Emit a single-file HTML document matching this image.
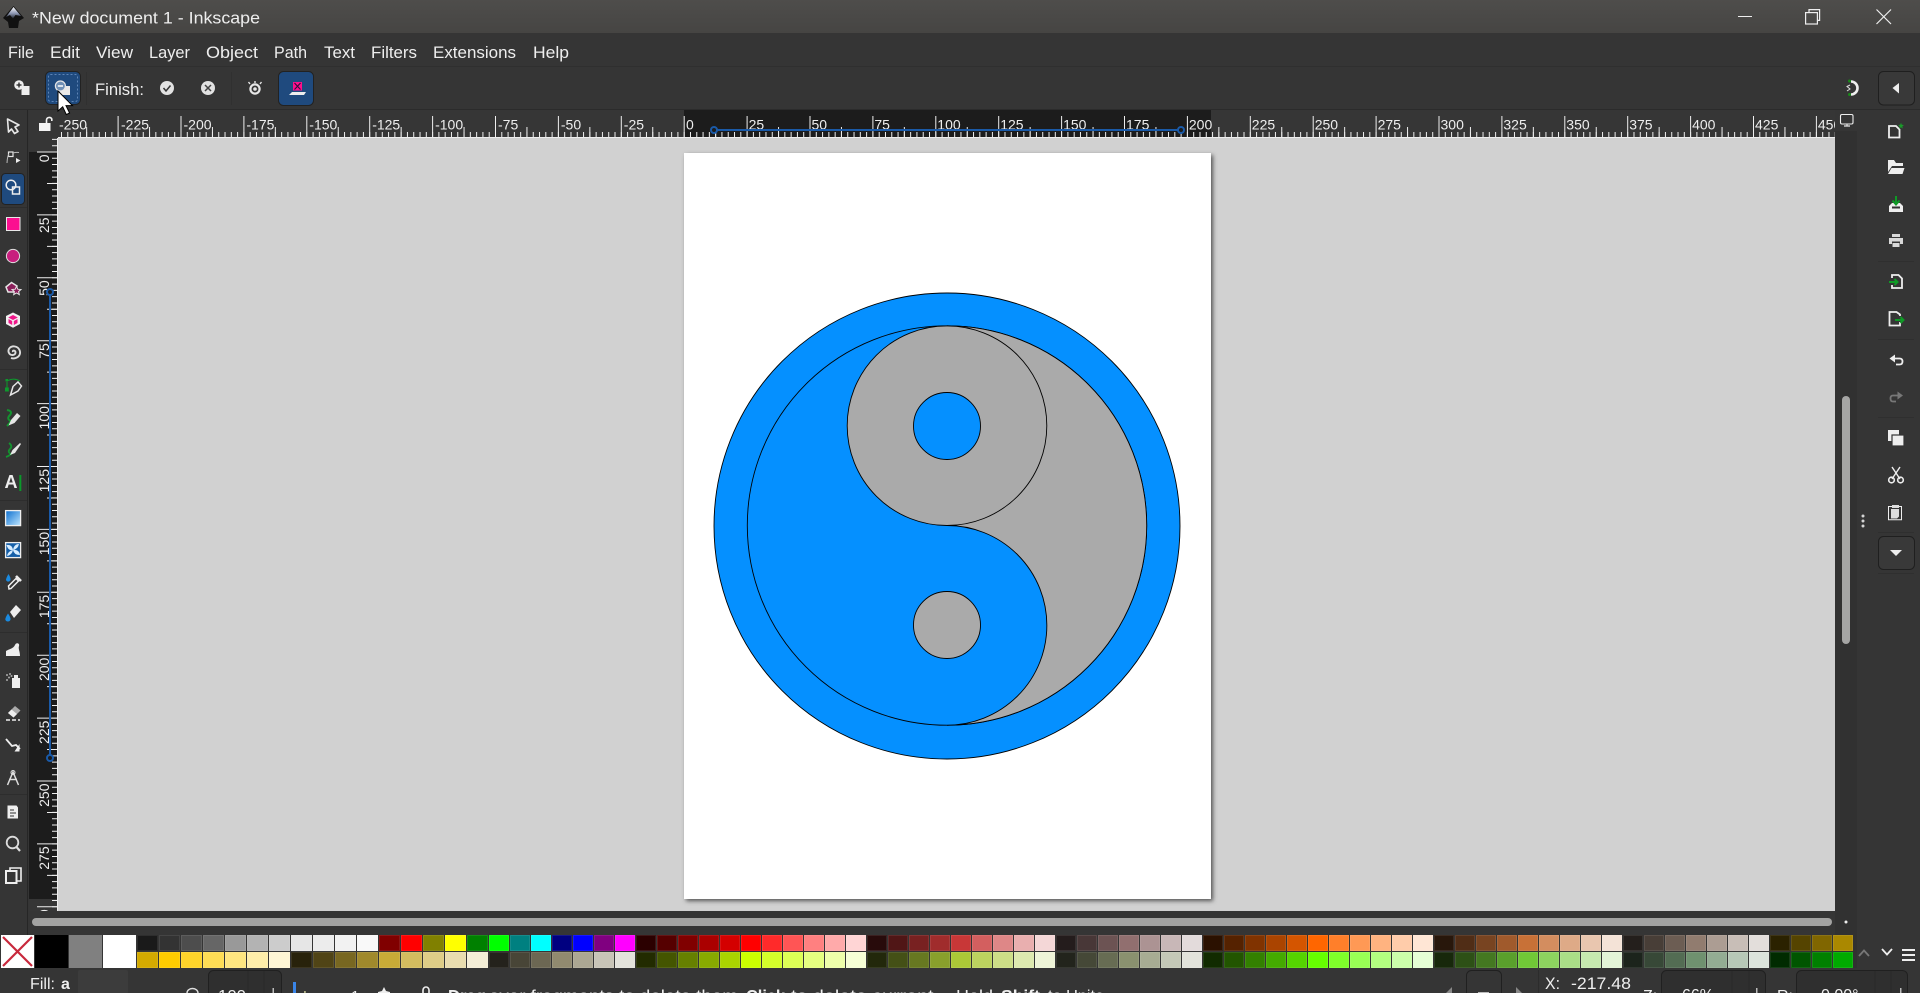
<!DOCTYPE html>
<html lang="en">
<head>
<meta charset="utf-8">
<title>New document 1 - Inkscape</title>
<style>
html,body{margin:0;padding:0;width:1920px;height:993px;overflow:hidden;background:#353535}
svg{position:absolute;left:0;top:0}
svg text{font-family:"Liberation Sans",sans-serif;fill:#eee}
.row{position:absolute;left:137px;display:flex;height:16px}
.row i{display:block;width:20px;height:16px;margin-right:1px;box-shadow:inset 0 0 0 1px rgba(255,255,255,.09)}
.row i:nth-child(-n+16){width:21px}
.big{position:absolute;top:935px;height:33px;width:33px}
</style>
</head>
<body>
<svg width="1920" height="993" viewBox="0 0 1920 993">
<defs>
<linearGradient id="tb" x1="0" y1="0" x2="0" y2="1"><stop offset="0" stop-color="#4e4d4b"/><stop offset="1" stop-color="#464543"/></linearGradient>
<linearGradient id="gr" x1="0" y1="0" x2="1" y2="1"><stop offset="0" stop-color="#0b6fd0"/><stop offset="1" stop-color="#bfe6ff"/></linearGradient>
<linearGradient id="lg" x1="0" y1="0" x2="0" y2="1"><stop offset="0" stop-color="#fff"/><stop offset=".55" stop-color="#8f99b5"/><stop offset="1" stop-color="#20242c"/></linearGradient>
<clipPath id="hr"><rect x="58" y="110" width="1777" height="28"/></clipPath>
<clipPath id="vr"><rect x="29" y="138" width="29" height="773"/></clipPath>
<filter id="sh" x="-5%" y="-5%" width="110%" height="110%"><feGaussianBlur stdDeviation="2"/></filter>
</defs>

<!-- Title bar -->
<rect x="0" y="0" width="1920" height="33" fill="url(#tb)"/>
<path d="M13.5 6 L24 18 L19 21 L18 28 L9 28 L8 22 L3 18 Z" fill="#111"/>
<path d="M13.5 7 L21 16 L15.5 15 L13 18.5 L10 15 L6 17 Z" fill="url(#lg)"/>
<text x="32" y="23.5" font-size="17" textLength="228" lengthAdjust="spacingAndGlyphs">*New document 1 - Inkscape</text>
<rect x="1738" y="16" width="14" height="1" fill="#eee"/>
<g fill="none" stroke="#eee" stroke-width="1.2">
<rect x="1805.6" y="12.6" width="11.8" height="11.4"/>
<path d="M1809 12.5 V9.6 H1819.6 V20.4 H1817.5"/>
<path d="M1876.5 9.5 L1891 24 M1891 9.5 L1876.5 24"/>
</g>

<!-- Menu -->
<rect x="0" y="33" width="1920" height="33" fill="#353535"/>
<rect x="0" y="66" width="1920" height="1" fill="#2f2f2f"/>
<g font-size="17">
<text x="8" y="58" textLength="26" lengthAdjust="spacingAndGlyphs">File</text>
<text x="50" y="58" textLength="30" lengthAdjust="spacingAndGlyphs">Edit</text>
<text x="96" y="58" textLength="37" lengthAdjust="spacingAndGlyphs">View</text>
<text x="149" y="58" textLength="41" lengthAdjust="spacingAndGlyphs">Layer</text>
<text x="206" y="58" textLength="52" lengthAdjust="spacingAndGlyphs">Object</text>
<text x="274" y="58" textLength="33" lengthAdjust="spacingAndGlyphs">Path</text>
<text x="324" y="58" textLength="31" lengthAdjust="spacingAndGlyphs">Text</text>
<text x="371" y="58" textLength="46" lengthAdjust="spacingAndGlyphs">Filters</text>
<text x="433" y="58" textLength="83" lengthAdjust="spacingAndGlyphs">Extensions</text>
<text x="533" y="58" textLength="36" lengthAdjust="spacingAndGlyphs">Help</text>
</g>

<!-- Tool controls -->
<rect x="0" y="109" width="1920" height="1" fill="#2b2b2b"/>
<rect x="86" y="72" width="1" height="33" fill="#303030"/>
<rect x="231" y="72" width="1" height="33" fill="#303030"/>
<!-- union -->
<circle cx="19" cy="85" r="4.8" fill="#eee"/>
<path d="M22 86 H29.5 V95 H21.5 V90 Z" fill="#eee"/>
<path d="M16.5 85 H21.5 M19 82.5 V87.5" stroke="#222" stroke-width="1.3"/>
<!-- difference button -->
<rect x="45.5" y="71.5" width="35" height="33" rx="5" fill="#1f4a7e" stroke="#222"/>
<rect x="48.5" y="74.5" width="29" height="27" rx="2" fill="none" stroke="#5e84b5" stroke-width="1" stroke-dasharray="2 2"/>
<path d="M63 86 H70 V95 H60 V91 Z" fill="#e8e8e8"/>
<circle cx="60.4" cy="86" r="5" fill="#6f8fb5" stroke="#e6e6e6" stroke-width="1.2"/>
<path d="M57.8 86 H63" stroke="#fff" stroke-width="1.5"/>
<text x="95" y="95" font-size="17" textLength="49" lengthAdjust="spacingAndGlyphs">Finish:</text>
<circle cx="167" cy="88" r="7" fill="#e2e2e2"/>
<path d="M163.5 88 L166 91 L170.5 85.5" fill="none" stroke="#333" stroke-width="1.5"/>
<circle cx="208" cy="88" r="7" fill="#e2e2e2"/>
<path d="M205 85 L211 91 M211 85 L205 91" stroke="#444" stroke-width="1.5"/>
<g fill="none" stroke="#e6e6e6">
<circle cx="255" cy="89" r="4.6" stroke-width="2.2"/>
<path d="M250 84 L248.5 82 M255 83 V81 M260 84 L261.5 82" stroke-width="1.4"/>
</g>
<circle cx="255" cy="89" r="1.8" fill="#e6e6e6"/>
<rect x="278.5" y="71.5" width="35" height="34" rx="5" fill="#1f4a7e" stroke="#222"/>
<rect x="293" y="82" width="9" height="8.5" fill="#ff0f8c"/>
<path d="M294.5 83 L300.5 89.5 M300.5 83 L294.5 89.5" stroke="#2a0f3c" stroke-width="1.1"/>
<path d="M292 92 H306 L304 95 H289 Z" fill="#eee"/>
<!-- snap -->
<path d="M1851 81.5 A6.5 6.5 0 1 1 1851 94.5" fill="none" stroke="#eee" stroke-width="2.6"/>
<circle cx="1849.5" cy="81" r="1.5" fill="#1a8a1a"/><circle cx="1849.5" cy="94.5" r="1.5" fill="#1a8a1a"/>
<path d="M1850 85 L1847 86.5 L1850 89 L1847 91" fill="none" stroke="#ddd" stroke-width="1"/>

<!-- Rulers backgrounds -->
<rect x="29" y="110" width="1806" height="28" fill="#363636"/>
<rect x="684" y="110" width="527" height="28" fill="#1c1c1c"/>
<rect x="29" y="138" width="29" height="773" fill="#363636"/>
<rect x="29" y="152" width="29" height="747" fill="#1c1c1c"/>
<!-- corner lock -->
<path d="M39 123 H50.5 V131 H39 Z" fill="#f2f2f2"/>
<path d="M46.5 123 V120 A2.8 2.8 0 0 1 51.8 119 V121" fill="none" stroke="#f2f2f2" stroke-width="1.6"/>
<!-- horizontal ticks -->
<g clip-path="url(#hr)" stroke="#eee" stroke-width="1">
<rect x="58" y="137" width="1777" height="1" fill="#eee" stroke="none"/>
<line x1="54.7" x2="1835" y1="135" y2="135" stroke-width="6" stroke-dasharray="1 5.29"/>
<line x1="86.15" x2="1835" y1="132.5" y2="132.5" stroke-width="11" stroke-dasharray="1 61.9"/>
<line x1="54.7" x2="1835" y1="127" y2="127" stroke-width="22" stroke-dasharray="1 61.9"/>
</g>
<g clip-path="url(#hr)" font-size="14">
<text x="59" y="129.5">-250</text>
<text x="121" y="129.5">-225</text>
<text x="183.5" y="129.5">-200</text>
<text x="246.4" y="129.5">-175</text>
<text x="309.3" y="129.5">-150</text>
<text x="372.2" y="129.5">-125</text>
<text x="435.1" y="129.5">-100</text>
<text x="498" y="129.5">-75</text>
<text x="560.9" y="129.5">-50</text>
<text x="623.8" y="129.5">-25</text>
<text x="686" y="129.5">0</text>
<text x="748.6" y="129.5">25</text>
<text x="811.5" y="129.5">50</text>
<text x="874.4" y="129.5">75</text>
<text x="937.3" y="129.5">100</text>
<text x="1000.2" y="129.5">125</text>
<text x="1063.1" y="129.5">150</text>
<text x="1126" y="129.5">175</text>
<text x="1188.9" y="129.5">200</text>
<text x="1251.8" y="129.5">225</text>
<text x="1314.7" y="129.5">250</text>
<text x="1377.6" y="129.5">275</text>
<text x="1440.5" y="129.5">300</text>
<text x="1503.4" y="129.5">325</text>
<text x="1566.3" y="129.5">350</text>
<text x="1629.2" y="129.5">375</text>
<text x="1692.1" y="129.5">400</text>
<text x="1755" y="129.5">425</text>
<text x="1817.9" y="129.5">450</text>
</g>
<!-- selection range on horizontal ruler -->
<path d="M714 130 H1181" stroke="#1a5aa8" stroke-width="2"/>
<circle cx="714" cy="130" r="3" fill="#1c1c1c" stroke="#1a5aa8" stroke-width="2"/>
<circle cx="1181" cy="130" r="3" fill="#1c1c1c" stroke="#1a5aa8" stroke-width="2"/>
<!-- vertical ticks -->
<g clip-path="url(#vr)" stroke="#eee">
<rect x="57" y="138" width="1" height="773" fill="#eee" stroke="none"/>
<line x1="55" x2="55" y1="138.9" y2="911" stroke-width="6" stroke-dasharray="1 5.29"/>
<line x1="52.5" x2="52.5" y1="182.95" y2="911" stroke-width="11" stroke-dasharray="1 61.9"/>
<line x1="47.5" x2="47.5" y1="151.5" y2="911" stroke-width="21" stroke-dasharray="1 61.9"/>
</g>
<g clip-path="url(#vr)" font-size="14" text-anchor="end">
<text transform="translate(49,154.5) rotate(-90)">0</text>
<text transform="translate(49,217.4) rotate(-90)">25</text>
<text transform="translate(49,280.3) rotate(-90)">50</text>
<text transform="translate(49,343.2) rotate(-90)">75</text>
<text transform="translate(49,406.1) rotate(-90)">100</text>
<text transform="translate(49,469) rotate(-90)">125</text>
<text transform="translate(49,531.9) rotate(-90)">150</text>
<text transform="translate(49,594.8) rotate(-90)">175</text>
<text transform="translate(49,657.7) rotate(-90)">200</text>
<text transform="translate(49,720.6) rotate(-90)">225</text>
<text transform="translate(49,783.5) rotate(-90)">250</text>
<text transform="translate(49,846.4) rotate(-90)">275</text>
<text transform="translate(49,909.3) rotate(-90)">300</text>
</g>
<path d="M50 292 V758" stroke="#1a5aa8" stroke-width="2"/>
<circle cx="50" cy="292" r="3" fill="#1c1c1c" stroke="#1a5aa8" stroke-width="2"/>
<circle cx="50" cy="758" r="3" fill="#1c1c1c" stroke="#1a5aa8" stroke-width="2"/>

<!-- Canvas -->
<rect x="58" y="138" width="1777" height="773" fill="#d1d1d1"/>
<rect x="686" y="155" width="527" height="746" fill="#555" filter="url(#sh)"/>
<rect x="684" y="153" width="527" height="746" fill="#fff"/>
<!-- yin-yang -->
<g stroke="#000" stroke-width="0.9">
<circle cx="947" cy="526" r="233" fill="#0590ff"/>
<circle cx="947" cy="525.5" r="199.7" fill="#0590ff"/>
<path d="M947 325.8 A199.7 199.7 0 0 1 947 725.2 A100 100 0 0 0 947 525.5 A100 100 0 0 1 947 325.8 Z" fill="#aaa" stroke="none"/>
<path d="M947 325.8 A199.7 199.7 0 0 1 947 725.2" fill="none"/>
<circle cx="947" cy="425.7" r="99.8" fill="#aaa"/>
<path d="M947 525.5 A99.8 99.8 0 0 1 947 725.2" fill="#0590ff"/>
<circle cx="947" cy="426" r="33.5" fill="#0590ff"/>
<circle cx="947" cy="625" r="33.5" fill="#aaa"/>
</g>

<!-- Cursor -->
<path d="M58 91 V111 L62.7 106.8 L66.3 114.6 L69.6 113 L66 105.6 L72.5 105.6 Z" fill="#fff" stroke="#000" stroke-width="1"/>

<!-- Left toolbar -->
<rect x="27" y="110" width="1" height="858" fill="#262626"/>
<g fill="#2d2d2d"><rect x="0" y="207" width="27" height="1"/><rect x="0" y="369" width="27" height="1"/><rect x="0" y="500" width="27" height="1"/><rect x="0" y="632" width="27" height="1"/><rect x="0" y="794" width="27" height="1"/></g>
<rect x="1.5" y="173.5" width="23" height="31" rx="4" fill="#1f4a7e" stroke="#222"/>
<!-- selector -->
<path d="M7.5 119 L19 125 L15 127 L18 131.5 L14.5 133.5 L11.5 129 L8.5 132 Z" fill="#333" stroke="#e6e6e6" stroke-width="1.6" stroke-linejoin="round"/>
<!-- node -->
<rect x="8.5" y="152" width="4.5" height="4.5" fill="#333" stroke="#e6e6e6" stroke-width="1.2"/>
<path d="M7 163 Q7.5 155 9 154 M13 153 Q16 152 19 152.5" fill="none" stroke="#bbb" stroke-width="1"/>
<path d="M16 158 L20.5 160.5 L16 163 Z" fill="#eee"/>
<!-- shape builder -->
<circle cx="11" cy="185" r="4.8" fill="none" stroke="#eee" stroke-width="1.5"/>
<rect x="12.5" y="187" width="7" height="7" fill="none" stroke="#eee" stroke-width="1.5"/>
<!-- rect -->
<rect x="6.5" y="217.5" width="13.5" height="13" fill="#fb1090" stroke="#e8e8e8" stroke-width="1"/>
<!-- ellipse -->
<circle cx="13" cy="256" r="6.6" fill="#c81f7e" stroke="#e0e0e0" stroke-width="1"/>
<!-- star -->
<path d="M6 287 L11.5 282.5 L17 286 L15.5 292 H8 Z" fill="#8c1f5b" stroke="#e6e6e6" stroke-width="1.5"/>
<path d="M16.5 286.2 L17.8 289.2 L21 289.5 L18.6 291.6 L19.3 294.6 L16.5 293 L13.7 294.6 L14.4 291.6 L12 289.5 L15.2 289.2 Z" fill="#8c1f5b" stroke="#e6e6e6" stroke-width="1"/>
<!-- 3d box -->
<path d="M13 312.5 L20 316 V324 L13 327.7 L6 324 V316 Z" fill="#f0f0f0"/>
<path d="M13 315 L17.8 317.5 L13 320 L8.2 317.5 Z" fill="#f0168a"/>
<path d="M8.5 319 L12.2 321 V325 L8.5 323 Z M17.5 319 L13.8 321 V325 L17.5 323 Z" fill="#f0168a"/>
<!-- spiral -->
<path d="M13 352 C12 350 15.5 350 15.5 352.5 C15.5 355.5 10.5 356 9 353 C7 349 11 345.5 15 346.5 C19.5 347.5 21 352 19.5 355 C18 358 14 359 11 358" fill="none" stroke="#ddd" stroke-width="1.9"/>
<!-- pen -->
<rect x="5" y="387.5" width="3.8" height="4" fill="#0d9a2d"/><rect x="5.5" y="379" width="2.5" height="2.5" fill="#0d9a2d"/>
<path d="M7 382 V388 M8 380.5 Q14 377.5 20 381" fill="none" stroke="#0d9a2d" stroke-width="1"/>
<path d="M10.5 395 L13 386.5 L18 382 L21.5 386 L18 391 Z" fill="none" stroke="#e6e6e6" stroke-width="1.5"/>
<!-- pencil -->
<path d="M7 410 Q13 411 10 415 Q6 419 11 421 Q9 424 7 426" fill="none" stroke="#14932f" stroke-width="2"/>
<path d="M8.5 425.5 L11 420 L17 413 L20.5 416 L14.5 423 Z" fill="#e6e6e6"/>
<!-- calligraphy -->
<path d="M9 443 Q13 446 10 449 Q7 452 11 454 Q9 456 6 457" fill="none" stroke="#14932f" stroke-width="1.8"/>
<path d="M10 455 L12.5 450 L20 443 L21 444 L15 453 Z" fill="#e6e6e6"/>
<!-- text -->
<text x="4.5" y="488" font-size="18" font-weight="bold">A</text>
<rect x="19.3" y="475" width="2" height="16" fill="#0a9a2a"/>
<!-- gradient -->
<rect x="5.6" y="510.6" width="15" height="15" fill="url(#gr)" stroke="#eee" stroke-width="1.3"/>
<!-- mesh -->
<rect x="5.6" y="542.6" width="15" height="15" fill="#155fa8" stroke="#eee" stroke-width="1.3"/>
<path d="M13 550 Q8 551 6.5 545 Q12 544 13 550 Q14 555 20 555 Q19 549 13 550 M13 550 Q12 555 7 556 Q8 551 13 550 M13 550 Q18 549 19 544 Q14 544 13 550" fill="#d6ecff"/>
<!-- dropper -->
<path d="M9 589 L8.5 586 L16 578.5 L18.5 581 L11 588.5 Z" fill="none" stroke="#eee" stroke-width="1.5"/>
<path d="M16 576 L21 581" stroke="#eee" stroke-width="2.6"/>
<path d="M8.5 574 Q11 578 10.5 580 A2.4 2.4 0 0 1 6 580 Q6 578 8.5 574 Z" fill="#1a8ae0"/>
<!-- bucket -->
<path d="M10 612 L16 605 L21 610 L14 618 Z" fill="#eee"/>
<path d="M8 613.5 Q10.8 617.5 10.5 619.5 A2.7 2.7 0 0 1 5.3 619.5 Q5.3 617.5 8 613.5 Z" fill="#1a8ae0"/>
<!-- tweak -->
<path d="M6 656 V651 C9 649 13 649 15 645 C16 642 20 643 19 646 C18 649 20 651 20 656 Z" fill="#eee"/>
<!-- spray -->
<path d="M12 678 H20 V688 H12 Z M14 675 H18 V678 H14 Z" fill="#eee"/>
<g fill="#aaa"><circle cx="7" cy="675" r="1"/><circle cx="10" cy="674" r="1"/><circle cx="9" cy="677.5" r="1"/><circle cx="11.5" cy="676" r="1"/><circle cx="7" cy="680" r="1"/></g>
<!-- eraser -->
<path d="M8 713 L15 706 L20.5 710.5 L13.5 717.5 Z" fill="#aaa"/>
<path d="M8 713 L11.5 709.5 L17 714 L13.5 717.5 Z" fill="#eee"/>
<path d="M6 720 H20" stroke="#eee" stroke-width="1.4" stroke-dasharray="4 2"/>
<!-- connector -->
<path d="M6 739 L12 746 L16 745 L20 749" fill="none" stroke="#eee" stroke-width="1.8"/>
<path d="M19.5 744 V751.5 H14.5 Z" fill="#eee"/>
<!-- lpe -->
<path d="M7.5 785 L13 772 L18.5 785 M9 779.5 H17" fill="none" stroke="#ddd" stroke-width="1.5"/>
<circle cx="13" cy="772.5" r="2" fill="none" stroke="#ddd"/>
<!-- doc -->
<path d="M7.5 805.5 H16.5 L18 807.5 V818.5 H7.5 Z" fill="#eee"/>
<path d="M10 810 H14 M10 813 H16 M10 816 H14" stroke="#333" stroke-width="1"/>
<!-- zoom -->
<circle cx="12.5" cy="842.5" r="5.8" fill="none" stroke="#ddd" stroke-width="1.8"/>
<path d="M16.5 847 L20 851" stroke="#ddd" stroke-width="2.2"/>
<!-- pages -->
<path d="M10 871 V868 H21 V881 H17" fill="none" stroke="#eee" stroke-width="1.6"/>
<rect x="6" y="871" width="10.5" height="12" fill="none" stroke="#eee" stroke-width="2"/>

<!-- Right column -->
<rect x="1835" y="110" width="22" height="858" fill="#313131"/>
<rect x="1835" y="110" width="22" height="21" fill="#353535"/>
<rect x="1840.5" y="114.5" width="12.5" height="9.5" rx="1.5" fill="none" stroke="#eee" stroke-width="1.1"/>
<path d="M1844 126 H1850" stroke="#eee" stroke-width="1.2"/><path d="M1846.5 124 H1847.5 V126 H1846.5 Z" fill="#eee"/>
<rect x="1842" y="396" width="8" height="248" rx="4" fill="#a5a5a4"/>
<g fill="#d5d5d5"><circle cx="1863" cy="516" r="1.5"/><circle cx="1863" cy="521" r="1.5"/><circle cx="1863" cy="526" r="1.5"/></g>
<rect x="32" y="918" width="1800" height="8" rx="4" fill="#a3a3a2"/>
<circle cx="1846" cy="922" r="1.5" fill="#eee"/>

<!-- Commands bar -->
<rect x="1878.5" y="71.5" width="36" height="33.5" rx="5" fill="#393939" stroke="#1f1f1f"/>
<path d="M1899 83 V93.5 L1892.5 88 Z" fill="#eee"/>
<rect x="1878.5" y="536.5" width="36" height="33" rx="5" fill="#393939" stroke="#1f1f1f"/>
<path d="M1890 550 H1902 L1896 556 Z" fill="#eee"/>
<g fill="#2f2f2f"><rect x="1878" y="261" width="36" height="1"/><rect x="1878" y="339" width="36" height="1"/><rect x="1878" y="417" width="36" height="1"/><rect x="1878" y="532" width="36" height="1"/><rect x="1878" y="573" width="36" height="1"/></g>
<!-- new -->
<path d="M1889 126 H1896 L1899.5 129.5 V137.5 H1889 Z" fill="#353535" stroke="#eee" stroke-width="1.8"/>
<path d="M1901 122.8 L1901.8 124.8 L1904 125 L1902.3 126.4 L1902.9 128.5 L1901 127.4 L1899.1 128.5 L1899.7 126.4 L1898 125 L1900.2 124.8 Z" fill="#1a9a2a"/>
<!-- open -->
<path d="M1888 160 H1894 L1896 163 H1903 V166 H1892 L1888 172 Z" fill="#eee"/>
<path d="M1891.5 168 H1904.5 L1902.5 174 H1888 Z" fill="#eee"/>
<!-- save -->
<path d="M1889 206 L1892 203 H1900 L1903 206 V212 H1889 Z" fill="#eee"/>
<rect x="1892" y="206.5" width="8" height="2" fill="#333"/>
<path d="M1896 196 V203 M1892.5 200.5 L1896 204.5 L1899.5 200.5" fill="none" stroke="#0e9a25" stroke-width="2"/>
<!-- print -->
<path d="M1892 234 H1900 V237 H1892 Z M1889 238 H1903 V244 H1900 V241.5 H1892 V244 H1889 Z M1892.5 243 H1899.5 V247 H1892.5 Z" fill="#d8d8d8"/>
<!-- import -->
<path d="M1892 278 V275 H1898.5 L1902 278.5 V288 H1892 V285" fill="none" stroke="#eee" stroke-width="1.8"/>
<path d="M1889 282 H1897 M1894.5 279 L1897.5 282 L1894.5 285" fill="none" stroke="#0e9a25" stroke-width="2"/>
<!-- export -->
<path d="M1900 316 V314.5 L1896.5 312 H1889.5 V325.5 H1900 V322" fill="none" stroke="#eee" stroke-width="1.8"/>
<path d="M1895 320 H1903 M1900.5 317 L1903.5 320 L1900.5 323" fill="none" stroke="#0e9a25" stroke-width="2"/>
<!-- undo/redo -->
<path d="M1891.5 358.5 H1899.5 Q1902.5 358.5 1902.5 361.5 Q1902.5 364.5 1899.5 364.5 H1896" fill="none" stroke="#eee" stroke-width="1.8"/>
<path d="M1895 354.5 L1889.5 358.5 L1895 362.5 Z" fill="#eee"/>
<path d="M1900.5 395.5 H1893 Q1890.5 395.5 1890.5 398.5 Q1890.5 401.5 1893 401.5 H1896" fill="none" stroke="#777" stroke-width="1.8"/>
<path d="M1897.5 391.5 L1903 395.5 L1897.5 399.5 Z" fill="#777"/>
<!-- duplicate -->
<rect x="1888" y="430" width="11" height="11" fill="#eee"/>
<rect x="1892" y="435" width="12" height="11" fill="#eee" stroke="#353535" stroke-width="1.2"/>
<!-- cut -->
<path d="M1892 467 L1900 479 M1900 467 L1892 479" stroke="#eee" stroke-width="1.4"/>
<circle cx="1891.5" cy="480" r="2.8" fill="none" stroke="#eee" stroke-width="1.6"/>
<circle cx="1900.5" cy="480" r="2.8" fill="none" stroke="#eee" stroke-width="1.6"/>
<!-- paste -->
<path d="M1893 506.5 H1888.5 V519.8 H1901.5 V506.5 H1898" fill="none" stroke="#eee" stroke-width="1"/>
<rect x="1892" y="505" width="7" height="3" fill="#ddd"/>
<path d="M1891 509 H1899 V516.5 L1897 518.5 H1891 Z" fill="#ddd"/>

<!-- Palette controls -->
<path d="M1859 956 L1864 950.5 L1869 956" fill="none" stroke="#777" stroke-width="1.8"/>
<path d="M1882 949 L1887 954.5 L1892 949" fill="none" stroke="#eee" stroke-width="1.8"/>
<path d="M1902 950 H1915 M1902 955 H1915 M1902 960 H1915" stroke="#eee" stroke-width="2"/>

<!-- Status bar -->
<text x="30" y="989" font-size="16" textLength="25" lengthAdjust="spacingAndGlyphs">Fill:</text>
<text x="61" y="989" font-size="16" font-weight="bold">a</text>
<rect x="78" y="970" width="50" height="24" rx="2" fill="#3c3c3c"/>
<path d="M187 993 A5.5 4.5 0 0 1 198 993" fill="none" stroke="#ddd" stroke-width="1.4"/>
<rect x="208.5" y="970.5" width="73" height="30" rx="5" fill="#2f2f2f" stroke="#202020"/>
<path d="M248 971 V993 M264 971 V993" stroke="#2a2a2a"/>
<text x="218" y="1001" font-size="16" textLength="28" lengthAdjust="spacingAndGlyphs">100</text>
<rect x="272.5" y="988" width="1.5" height="5" fill="#bbb"/>
<rect x="293" y="982" width="3" height="11" fill="#3a85e8"/>
<text x="303" y="1001" font-size="15" style="fill:#cc9">L</text>
<text x="351" y="1001" font-size="15">1</text>
<path d="M384 987 L386 991 L390 992 L390 993 H378 V992 L382 991 Z" fill="#eee"/>
<path d="M423 993 V990 A3 3 0 0 1 429 990 V993" fill="none" stroke="#eee" stroke-width="1.6"/>
<g font-size="17">
<text x="448" y="1001.6" font-weight="bold" textLength="38" lengthAdjust="spacingAndGlyphs">Drag</text>
<text x="489" y="1001.6" textLength="254" lengthAdjust="spacingAndGlyphs">over fragments to delete them.</text>
<text x="746" y="1001.6" font-weight="bold" textLength="39" lengthAdjust="spacingAndGlyphs">Click</text>
<text x="791" y="1001.6" textLength="148" lengthAdjust="spacingAndGlyphs">to delete current.</text>
<text x="956" y="1001.6" textLength="37" lengthAdjust="spacingAndGlyphs">Hold</text>
<text x="1001" y="1001.6" font-weight="bold" textLength="39" lengthAdjust="spacingAndGlyphs">Shift</text>
<text x="1048" y="1001.6" textLength="56" lengthAdjust="spacingAndGlyphs">to Unite</text>
</g>
<path d="M1446 993 L1452 987 V993 Z" fill="#888"/>
<path d="M1516 987 L1522 993 H1516 Z" fill="#888"/>
<rect x="1466.5" y="970.5" width="35" height="30" rx="5" fill="#353535" stroke="#202020"/>
<rect x="1478" y="992" width="11" height="2" fill="#bbb"/>
<rect x="1538" y="970" width="1" height="23" fill="#2c2c2c"/>
<text x="1545" y="989" font-size="17" textLength="15" lengthAdjust="spacingAndGlyphs">X:</text>
<text x="1571" y="989" font-size="17" textLength="60" lengthAdjust="spacingAndGlyphs">-217.48</text>
<text x="1643" y="1001" font-size="16">Z:</text>
<rect x="1661.5" y="970.5" width="104" height="30" rx="5" fill="#2f2f2f" stroke="#202020"/>
<path d="M1732 971 V993 M1749 971 V993" stroke="#2a2a2a"/>
<text x="1682" y="1000" font-size="16">66%</text>
<rect x="1756" y="988" width="1.5" height="5" fill="#bbb"/>
<text x="1777" y="1001" font-size="16">R:</text>
<rect x="1796.5" y="970.5" width="111" height="30" rx="5" fill="#2f2f2f" stroke="#202020"/>
<path d="M1875 971 V993 M1891 971 V993" stroke="#2a2a2a"/>
<text x="1821" y="1000" font-size="16">0.00°</text>
<rect x="1900" y="988" width="1.5" height="5" fill="#bbb"/>

<!-- X swatch -->
<rect x="1" y="935" width="33" height="33" fill="#fff"/>
<path d="M3 937 L32 966 M32 937 L3 966" stroke="#c8283c" stroke-width="2.2"/>
</svg>

<div class="big" style="left:35px;background:#000"></div>
<div class="big" style="left:69px;background:#808080"></div>
<div class="big" style="left:103px;background:#fff"></div>

<div class="row" style="top:935px"><i style="background:#1a1a1a"></i><i style="background:#333"></i><i style="background:#4d4d4d"></i><i style="background:#666"></i><i style="background:#999"></i><i style="background:#b3b3b3"></i><i style="background:#ccc"></i><i style="background:#e6e6e6"></i><i style="background:#ececec"></i><i style="background:#f2f2f2"></i><i style="background:#f9f9f9"></i><i style="background:#800000"></i><i style="background:#f00"></i><i style="background:#808000"></i><i style="background:#ff0"></i><i style="background:#008000"></i><i style="background:#0f0"></i><i style="background:#008080"></i><i style="background:#0ff"></i><i style="background:#000080"></i><i style="background:#00f"></i><i style="background:#800080"></i><i style="background:#f0f"></i><i style="background:#2b0000"></i><i style="background:#500"></i><i style="background:#800000"></i><i style="background:#a00"></i><i style="background:#d40000"></i><i style="background:#f00"></i><i style="background:#ff2a2a"></i><i style="background:#f55"></i><i style="background:#ff8080"></i><i style="background:#faa"></i><i style="background:#ffd5d5"></i><i style="background:#280b0b"></i><i style="background:#501616"></i><i style="background:#782121"></i><i style="background:#a02c2c"></i><i style="background:#c83737"></i><i style="background:#d35f5f"></i><i style="background:#de8787"></i><i style="background:#e9afaf"></i><i style="background:#f4d7d7"></i><i style="background:#241c1c"></i><i style="background:#483737"></i><i style="background:#6c5353"></i><i style="background:#916f6f"></i><i style="background:#ac9393"></i><i style="background:#c8b7b7"></i><i style="background:#e3dbdb"></i><i style="background:#2b1100"></i><i style="background:#520"></i><i style="background:#803300"></i><i style="background:#a40"></i><i style="background:#d45500"></i><i style="background:#f60"></i><i style="background:#ff7f2a"></i><i style="background:#f95"></i><i style="background:#ffb380"></i><i style="background:#fca"></i><i style="background:#ffe6d5"></i><i style="background:#28170b"></i><i style="background:#502d16"></i><i style="background:#784421"></i><i style="background:#a05a2c"></i><i style="background:#c87137"></i><i style="background:#d38d5f"></i><i style="background:#deaa87"></i><i style="background:#e9c6af"></i><i style="background:#f4e3d7"></i><i style="background:#241f1c"></i><i style="background:#483e37"></i><i style="background:#6c5d53"></i><i style="background:#917c6f"></i><i style="background:#ac9d93"></i><i style="background:#c8beb7"></i><i style="background:#e3dedb"></i><i style="background:#2b2200"></i><i style="background:#540"></i><i style="background:#806600"></i><i style="background:#a80"></i></div>

<div class="row" style="top:952px"><i style="background:#d4aa00"></i><i style="background:#fc0"></i><i style="background:#ffd42a"></i><i style="background:#fd5"></i><i style="background:#ffe680"></i><i style="background:#fea"></i><i style="background:#fff6d5"></i><i style="background:#28220b"></i><i style="background:#504416"></i><i style="background:#786721"></i><i style="background:#a0892c"></i><i style="background:#c8ab37"></i><i style="background:#d3bc5f"></i><i style="background:#decd87"></i><i style="background:#e9ddaf"></i><i style="background:#f4eed7"></i><i style="background:#24221c"></i><i style="background:#484537"></i><i style="background:#6c6753"></i><i style="background:#918a6f"></i><i style="background:#aca793"></i><i style="background:#c8c4b7"></i><i style="background:#e3e2db"></i><i style="background:#222b00"></i><i style="background:#450"></i><i style="background:#668000"></i><i style="background:#8a0"></i><i style="background:#aad400"></i><i style="background:#cf0"></i><i style="background:#d4ff2a"></i><i style="background:#df5"></i><i style="background:#e5ff80"></i><i style="background:#efa"></i><i style="background:#f6ffd5"></i><i style="background:#22280b"></i><i style="background:#445016"></i><i style="background:#677821"></i><i style="background:#89a02c"></i><i style="background:#abc837"></i><i style="background:#bcd35f"></i><i style="background:#cdde87"></i><i style="background:#dde9af"></i><i style="background:#eef4d7"></i><i style="background:#22241c"></i><i style="background:#454837"></i><i style="background:#676c53"></i><i style="background:#8a916f"></i><i style="background:#a7ac93"></i><i style="background:#c4c8b7"></i><i style="background:#e2e3db"></i><i style="background:#112b00"></i><i style="background:#250"></i><i style="background:#338000"></i><i style="background:#4a0"></i><i style="background:#55d400"></i><i style="background:#6f0"></i><i style="background:#7fff2a"></i><i style="background:#9f5"></i><i style="background:#b3ff80"></i><i style="background:#cfa"></i><i style="background:#e5ffd5"></i><i style="background:#17280b"></i><i style="background:#2d5016"></i><i style="background:#447821"></i><i style="background:#5aa02c"></i><i style="background:#71c837"></i><i style="background:#8dd35f"></i><i style="background:#aade87"></i><i style="background:#c6e9af"></i><i style="background:#e3f4d7"></i><i style="background:#1c241c"></i><i style="background:#374837"></i><i style="background:#536c53"></i><i style="background:#6f916f"></i><i style="background:#93ac93"></i><i style="background:#b7c8b7"></i><i style="background:#dbe3db"></i><i style="background:#002b00"></i><i style="background:#050"></i><i style="background:#008000"></i><i style="background:#0a0"></i></div>
</body>
</html>
